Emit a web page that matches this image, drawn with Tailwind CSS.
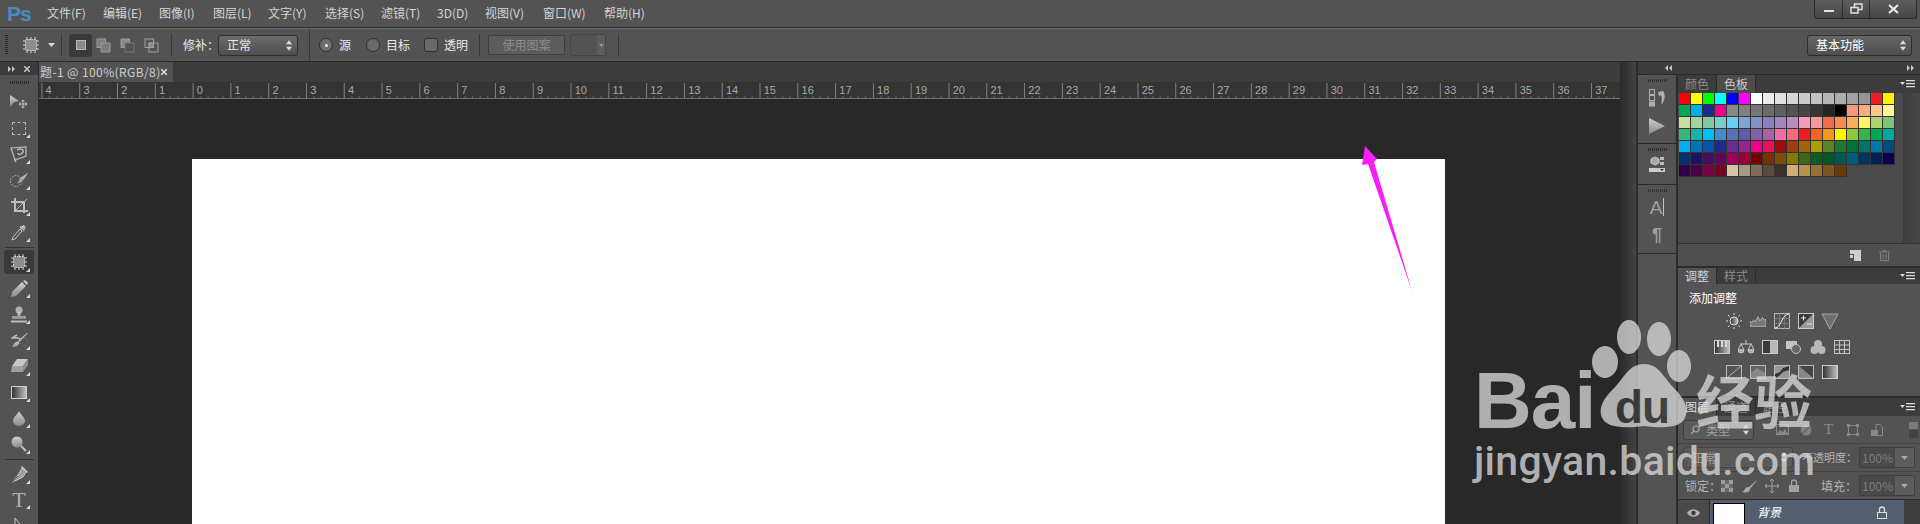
<!DOCTYPE html>
<html lang="en">
  <head>
    <meta charset="UTF-8" />
    <title>Photoshop</title>
    <script src="https://cdn.jsdelivr.net/npm/@tailwindcss/browser@4"></script>
  </head>
  <body class="bg-[#535353] overflow-hidden font-['Noto_Sans_CJK_SC',sans-serif]">
    <svg width="0" height="0" class="absolute">
      <defs>
        <linearGradient id="grey" x1="0" y1="0" x2="0" y2="1"><stop offset="0" stop-color="#d0d0d0" /><stop offset="1" stop-color="#8a8a8a" /></linearGradient>
        <linearGradient id="side" x1="0" y1="0" x2="1" y2="0"><stop offset="0" stop-color="#2e2e2e" /><stop offset="1" stop-color="#c4c4c4" /></linearGradient>
        <symbol id="panel-menu" viewBox="0 0 15 8"><path d="M0 2h5L2.500 5z" fill="#ddd" /><path d="M6 0h9v1.2H6zM6 3h9v1.2H6zM6 6h9v1.2H6z" fill="#ddd" /></symbol>
        <symbol id="updown" viewBox="0 0 7 12"><path d="M3.500 0 7 4.500H0zM3.500 12 0 7.500h7z" fill="#ddd" /></symbol>
        <symbol id="patch" viewBox="0 0 18 18"><path d="M1 5h16M1 9h16M1 13h16M5 1v16M9 1v16M13 1v16" stroke="#d8d8d8" fill="none" /><rect x="3.500" y="3.500" width="11" height="11" rx="1" fill="#8e8e8e" stroke="#d8d8d8" stroke-dasharray="1.500 1" /></symbol>
        <symbol id="corner" viewBox="0 0 4 4"><path d="M4 0v4H0z" fill="#d8d8d8" /></symbol>
      </defs>
    </svg>

    <div class="relative w-[1920px] h-[524px] overflow-hidden">
      <!-- menu bar -->
      <div class="h-[28px] flex items-center bg-[#535353] border-b border-[#2f2f2f]">
        <div class="w-[47px] pl-[7px] text-[21px] leading-none font-bold tracking-[-1px] text-[#4a8ac0] font-['Liberation_Sans',sans-serif]">Ps</div>
        <div class="flex gap-[16px] mb-px text-[12px] text-[#d4d4d4]">
          <span class="w-[40px] whitespace-nowrap">文件(F)</span>
          <span class="w-[40px] whitespace-nowrap">编辑(E)</span>
          <span class="w-[38px] whitespace-nowrap">图像(I)</span>
          <span class="w-[39px] whitespace-nowrap">图层(L)</span>
          <span class="w-[41px] whitespace-nowrap">文字(Y)</span>
          <span class="w-[40px] whitespace-nowrap">选择(S)</span>
          <span class="w-[40px] whitespace-nowrap">滤镜(T)</span>
          <span class="w-[32px] whitespace-nowrap">3D(D)</span>
          <span class="w-[42px] whitespace-nowrap">视图(V)</span>
          <span class="w-[45px] whitespace-nowrap">窗口(W)</span>
          <span class="whitespace-nowrap">帮助(H)</span>
        </div>
        <div class="ml-auto mr-[3px] mb-[9px] w-[103px] h-[19px] flex rounded-b-[3px] border border-t-0 border-[#2b2b2b] bg-gradient-to-b from-[#5c5c5c] to-[#474747]">
          <div class="w-[28px] flex items-center justify-center border-r border-[#2b2b2b]"><div class="w-[10px] h-[2px] mt-[4px] bg-[#e0e0e0]"></div></div>
          <div class="w-[27px] flex items-center justify-center border-r border-[#2b2b2b]">
            <svg width="13" height="11" viewBox="0 0 13 11" fill="none" stroke="#e0e0e0" stroke-width="1.500"><rect x="4.500" y="1" width="7.500" height="5.500" /><rect x="1" y="4.500" width="7" height="5.500" fill="#505050" /></svg>
          </div>
          <div class="flex-1 flex items-center justify-center">
            <svg width="11" height="10" viewBox="0 0 11 10" stroke="#e8e8e8" stroke-width="2.200"><path d="M1 1l9 8M10 1l-9 8" /></svg>
          </div>
        </div>
      </div>

      <!-- options bar -->
      <div class="h-[34px] flex items-center bg-[#535353] border-t border-b border-[#6a6a6a] border-b-[#2a2a2a] text-[12px] text-[#e8e8e8]">
        <div class="ml-[5px] w-[3px] h-[20px] bg-[repeating-linear-gradient(180deg,#2f2f2f_0,#2f2f2f_1px,transparent_1px,transparent_2px)]"></div>
        <svg class="ml-[14px]" width="18" height="18"><use href="#patch" /></svg>
        <svg class="ml-[8px]" width="7" height="4" viewBox="0 0 7 4"><path d="M0 0h7L3.500 4z" fill="#ddd" /></svg>
        <div class="ml-[6px] w-px h-[22px] bg-[#3a3a3a]"></div>
        <div class="ml-[7px] w-[23px] h-[23px] flex items-center justify-center rounded-[3px] bg-[#3a3a3a]">
          <div class="w-[10px] h-[10px] border border-[#b8b8b8] bg-[#8c8c8c]"></div>
        </div>
        <svg class="ml-[4px]" width="15" height="15" viewBox="0 0 15 15" fill="none" stroke="#9c9c9c"><rect x="1" y="1" width="8.500" height="8.500" fill="#7d7d7d" /><rect x="5" y="5" width="9" height="9" fill="#7d7d7d" /></svg>
        <svg class="ml-[9px]" width="15" height="15" viewBox="0 0 15 15" fill="none" stroke="#9c9c9c"><rect x="1" y="1" width="8.500" height="8.500" fill="#8c8c8c" /><rect x="5" y="5" width="9" height="9" fill="#535353" stroke="#777" /></svg>
        <svg class="ml-[9px]" width="15" height="15" viewBox="0 0 15 15" fill="none" stroke="#a0a0a0"><rect x="1" y="1" width="8.500" height="8.500" /><rect x="5" y="5" width="9" height="9" /><rect x="5" y="5" width="4.500" height="4.500" fill="#8c8c8c" /></svg>
        <div class="ml-[12px] w-px h-[22px] bg-[#3a3a3a]"></div>
        <span class="ml-[11px] w-[35px] whitespace-nowrap">修补：</span>
        <div class="w-[80px] h-[21px] flex items-center pl-[8px] pr-[5px] rounded-[3px] border border-[#2f2f2f] bg-gradient-to-b from-[#6c6c6c] to-[#4e4e4e]">
          <span>正常</span>
          <svg class="ml-auto" width="6" height="11"><use href="#updown" /></svg>
        </div>
        <div class="ml-[11px] w-px h-[32px] bg-[#3a3a3a]"></div>
        <div class="ml-[9px] w-[14px] h-[14px] flex items-center justify-center rounded-full border border-[#2f2f2f] bg-[#6e6e6e]"><div class="w-[3px] h-[3px] rounded-full bg-white"></div></div>
        <span class="ml-[6px]">源</span>
        <div class="ml-[15px] w-[14px] h-[14px] rounded-full border border-[#2f2f2f] bg-[#6a6a6a]"></div>
        <span class="ml-[6px]">目标</span>
        <div class="ml-[14px] w-[14px] h-[14px] rounded-[3px] border border-[#2f2f2f] bg-[#6a6a6a]"></div>
        <span class="ml-[6px]">透明</span>
        <div class="ml-[11px] w-px h-[22px] bg-[#3a3a3a]"></div>
        <div class="ml-[8px] w-[77px] h-[20px] flex items-center justify-center rounded-[2px] border border-[#3f3f3f] bg-[#5c5c5c] text-[#8c8c8c]">使用图案</div>
        <div class="ml-[5px] w-[36px] h-[22px] flex rounded-[2px] border border-[#454545]">
          <div class="flex-1"></div>
          <div class="w-[8px] flex items-center justify-center bg-[#5e5e5e]"><svg width="5" height="3" viewBox="0 0 5 3"><path d="M0 0h5L2.500 3z" fill="#999" /></svg></div>
        </div>
        <div class="ml-[12px] w-px h-[22px] bg-[#3a3a3a]"></div>
        <div class="ml-auto mr-[8px] w-[105px] h-[21px] flex items-center pl-[8px] pr-[5px] rounded-[3px] border border-[#2f2f2f] bg-gradient-to-b from-[#666] to-[#4e4e4e]">
          <span class="text-white">基本功能</span>
          <svg class="ml-auto" width="6" height="11"><use href="#updown" /></svg>
        </div>
      </div>

      <!-- workspace -->
      <div class="flex h-[462px]">
        <!-- tools -->
        <div class="w-[39px] shrink-0 flex flex-col bg-[#535353] border-r border-[#2b2b2b]">
          <div class="h-[13px] shrink-0 flex items-center justify-between px-[8px] bg-[#3b3b3b]">
            <svg width="7" height="6" viewBox="0 0 7 6" fill="#c8c8c8"><path d="M0 0l3 3-3 3zM4 0l3 3-3 3z" /></svg>
            <svg width="6" height="6" viewBox="0 0 6 6" stroke="#c8c8c8" stroke-width="1.500"><path d="M0 0l6 6M6 0l-6 6" /></svg>
          </div>
          <div class="h-[14px] shrink-0 flex items-center justify-center"><div class="w-[19px] h-[3px] bg-[repeating-linear-gradient(90deg,#2f2f2f_0,#2f2f2f_1px,transparent_1px,transparent_2px)]"></div></div>

          <div class="h-[26px] shrink-0 flex items-center justify-center">
            <svg width="20" height="16" viewBox="0 0 20 16"><path d="M1 1l9 6-5 1-4 5z" fill="url(#grey)" /><path d="M14 6v8M10 10h8M12.500 7.500 14 6l1.500 1.500M12.500 12.500 14 14l1.500-1.500M11.500 8.500 10 10l1.500 1.500M16.500 8.500 18 10l-1.500 1.500" fill="none" stroke="#c4c4c4" /></svg>
          </div>
          <div class="relative h-[26px] shrink-0 flex items-center justify-center">
            <div class="w-[14px] h-[13px] border border-dashed border-[#b8b8b8]"></div>
            <svg class="absolute right-[8px] bottom-[3px]" width="4" height="4"><use href="#corner" /></svg>
          </div>
          <div class="relative h-[26px] shrink-0 flex items-center justify-center">
            <svg width="18" height="18" viewBox="0 0 18 18" fill="none" stroke="#bdbdbd" stroke-width="1.200"><path d="M1 3l15-1 0 9-11 4z" /><path d="M7 5c3-2 7-1 6 2s-5 3-5 1M5 15l1 2" stroke-width="1.500" /></svg>
            <svg class="absolute right-[8px] bottom-[3px]" width="4" height="4"><use href="#corner" /></svg>
          </div>
          <div class="relative h-[26px] shrink-0 flex items-center justify-center">
            <svg width="19" height="16" viewBox="0 0 19 16"><circle cx="6" cy="9" r="5.500" fill="none" stroke="#c4c4c4" stroke-dasharray="1.500 1.500" /><path d="M18 1 10 6 7 12l5-2z" fill="url(#grey)" /></svg>
            <svg class="absolute right-[8px] bottom-[3px]" width="4" height="4"><use href="#corner" /></svg>
          </div>
          <div class="relative h-[26px] shrink-0 flex items-center justify-center">
            <svg width="17" height="17" viewBox="0 0 17 17" fill="none" stroke="#bdbdbd" stroke-width="2"><path d="M0 4h13v11M4 0v13h13" /><path d="M4 13 16 1" stroke-width="1" /></svg>
            <svg class="absolute right-[8px] bottom-[3px]" width="4" height="4"><use href="#corner" /></svg>
          </div>
          <div class="relative h-[26px] shrink-0 flex items-center justify-center">
            <svg width="16" height="17" viewBox="0 0 16 17"><path d="M9 5 2 13l-1 3 3-1 7-8z" fill="none" stroke="#c4c4c4" /><path d="M8 3l5 5 1-3 1-1-2-3-2 1z" fill="url(#grey)" /></svg>
            <svg class="absolute right-[8px] bottom-[3px]" width="4" height="4"><use href="#corner" /></svg>
          </div>
          <div class="h-[4px] shrink-0 flex items-center justify-center"><div class="w-[29px] h-px bg-[#333]"></div></div>

          <div class="relative h-[26px] shrink-0 flex items-center justify-center">
            <div class="absolute inset-x-[4px] inset-y-px rounded-[3px] bg-[#3a3a3a]"></div>
            <svg class="relative" width="18" height="18"><use href="#patch" /></svg>
            <svg class="absolute right-[8px] bottom-[3px]" width="4" height="4"><use href="#corner" /></svg>
          </div>
          <div class="relative h-[26px] shrink-0 flex items-center justify-center">
            <svg width="17" height="17" viewBox="0 0 17 17"><path d="M11 2 1 12l-1 5 5-1L15 6z" fill="url(#grey)" /><path d="M12 1l4 4 1-2-3-3z" fill="#c8c8c8" /></svg>
            <svg class="absolute right-[8px] bottom-[3px]" width="4" height="4"><use href="#corner" /></svg>
          </div>
          <div class="relative h-[26px] shrink-0 flex items-center justify-center">
            <svg width="16" height="17" viewBox="0 0 16 17"><circle cx="8" cy="4" r="3.500" fill="#b0b0b0" /><path d="M6.500 6h3v4H15v3H1v-3h5.500z" fill="url(#grey)" /><rect x="0" y="14.500" width="16" height="2" fill="#bbb" /></svg>
            <svg class="absolute right-[8px] bottom-[3px]" width="4" height="4"><use href="#corner" /></svg>
          </div>
          <div class="relative h-[26px] shrink-0 flex items-center justify-center">
            <svg width="17" height="15" viewBox="0 0 17 15"><path d="M17 0 9 8l-3 2 2-3 8-7z" fill="#ccc" /><path d="M6 2 1 5h5c2 0 3 1 3 1" fill="none" stroke="#bbb" stroke-width="1.500" /><path d="M8 9c-2-1-5 0-7 5 3 0 7 0 7-5z" fill="url(#grey)" /><circle cx="13" cy="9" r="4" fill="none" stroke="#999" stroke-dasharray="1 1.500" /></svg>
            <svg class="absolute right-[8px] bottom-[3px]" width="4" height="4"><use href="#corner" /></svg>
          </div>
          <div class="relative h-[26px] shrink-0 flex items-center justify-center">
            <svg width="17" height="14" viewBox="0 0 17 14"><path d="M6 0h11l-5 7H1z" fill="#c8c8c8" /><path d="M1 7h11v6H0z" fill="#a0a0a0" /><path d="M12 7l5-7v6l-5 7z" fill="#8e8e8e" /></svg>
            <svg class="absolute right-[8px] bottom-[3px]" width="4" height="4"><use href="#corner" /></svg>
          </div>
          <div class="relative h-[26px] shrink-0 flex items-center justify-center">
            <svg width="16" height="13" viewBox="0 0 16 13"><rect x=".5" y=".5" width="15" height="12" fill="url(#side)" stroke="#cfcfcf" /></svg>
            <svg class="absolute right-[8px] bottom-[3px]" width="4" height="4"><use href="#corner" /></svg>
          </div>
          <div class="relative h-[26px] shrink-0 flex items-center justify-center">
            <svg width="12" height="15" viewBox="0 0 12 15"><path d="M6 0c1 3 6 6 6 10a6 5 0 0 1-12 0C0 6 5 3 6 0z" fill="url(#grey)" /></svg>
            <svg class="absolute right-[8px] bottom-[3px]" width="4" height="4"><use href="#corner" /></svg>
          </div>
          <div class="relative h-[26px] shrink-0 flex items-center justify-center">
            <svg width="16" height="16" viewBox="0 0 16 16"><circle cx="6" cy="6" r="5.500" fill="url(#grey)" /><path d="M10 10l5 5" stroke="#c0c0c0" stroke-width="2" /></svg>
            <svg class="absolute right-[8px] bottom-[3px]" width="4" height="4"><use href="#corner" /></svg>
          </div>
          <div class="h-[4px] shrink-0 flex items-center justify-center"><div class="w-[29px] h-px bg-[#333]"></div></div>

          <div class="relative h-[26px] shrink-0 flex items-center justify-center">
            <svg width="17" height="17" viewBox="0 0 17 17"><path d="M11 2l4 4-3 5-6 3-5 2 6-7z" fill="#9c9c9c" stroke="#c8c8c8" /><path d="M1 16l6-6" stroke="#444" /><path d="M11 0l6 6-1 1-6-6z" fill="#c8c8c8" /></svg>
            <svg class="absolute right-[8px] bottom-[3px]" width="4" height="4"><use href="#corner" /></svg>
          </div>
          <div class="relative h-[25px] shrink-0 flex items-center justify-center">
            <span class="text-[22px] leading-none text-[#b0b0b0] font-['Liberation_Serif',serif]">T</span>
            <svg class="absolute right-[8px] bottom-[3px]" width="4" height="4"><use href="#corner" /></svg>
          </div>
          <div class="h-[26px] shrink-0 flex items-center justify-center">
            <svg width="10" height="16" viewBox="0 0 10 16"><path d="M1 1v14l3-4h5z" fill="#4a4a4a" stroke="#c8c8c8" /></svg>
          </div>
        </div>

        <!-- document -->
        <div class="w-[1581px] shrink-0 flex flex-col overflow-hidden">
          <div class="h-[20px] shrink-0 flex bg-[#3c3c3c]">
            <div class="w-[134px] shrink-0 flex items-center justify-between pl-[1px] pr-[7px] bg-[#535353] text-[12px] tracking-[0.4px] text-[#cdcdcd] whitespace-nowrap">
              <span>题-1 @ 100%(RGB/8)</span>
              <svg class="shrink-0" width="6" height="6" viewBox="0 0 6 6" stroke="#ddd" stroke-width="1.500"><path d="M0 0l6 6M6 0l-6 6" /></svg>
            </div>
          </div>
          <div id="ruler" class="relative h-[17px] shrink-0 bg-[#343434] text-[11px] leading-none text-[#a8a8a8] font-['Liberation_Sans',sans-serif]">
            <svg class="absolute inset-0" width="1581" height="17">
              <defs>
                <pattern id="ticks" width="37.795" height="17" patternUnits="userSpaceOnUse" patternTransform="translate(2.400 0)">
                  <path d="M.5 1v15" stroke="#808080" fill="none" />
                  <path d="M8 14v2M15.500 14v2M23 14v2M30.500 14v2" stroke="#666" fill="none" />
                </pattern>
              </defs>
              <rect width="1581" height="17" fill="url(#ticks)" />
              <rect y="16" width="1581" height="1" fill="#727272" />
            </svg>
          </div>
          <div class="flex-1 bg-[#282828] pl-[153px] pt-[60px]">
            <div class="w-[1253px] h-[400px] bg-white"></div>
          </div>
        </div>

        <!-- gutter -->
        <div class="w-[18px] shrink-0 border-r-2 border-[#2b2b2b] bg-gradient-to-r from-[#2a2a2a] to-[#444]"></div>

        <!-- docks -->
        <div class="flex-1 flex flex-col">
          <div class="h-[13px] shrink-0 flex items-center justify-between pl-[27px] pr-[6px] bg-[#3c3c3c] border-b border-[#2b2b2b]">
            <svg width="7" height="6" viewBox="0 0 7 6" fill="#c8c8c8"><path d="M3 0v6L0 3zM7 0v6L4 3z" /></svg>
            <svg width="7" height="6" viewBox="0 0 7 6" fill="#c8c8c8"><path d="M0 0l3 3-3 3zM4 0l3 3-3 3z" /></svg>
          </div>
          <div class="flex-1 flex">
            <!-- icon dock -->
            <div class="w-[40px] shrink-0 flex flex-col border-r-2 border-[#2b2b2b]">
              <div class="h-[69px] shrink-0 flex flex-col items-center border-b border-[#2b2b2b]">
                <div class="mt-[4px] w-[19px] h-[3px] bg-[repeating-linear-gradient(90deg,#2f2f2f_0,#2f2f2f_1px,transparent_1px,transparent_2px)]"></div>
                <svg class="mt-[7px]" width="17" height="18" viewBox="0 0 17 18"><g fill="none" stroke="#b0b0b0"><rect x=".5" y=".5" width="5" height="5" /><rect x=".5" y="6.500" width="5" height="5" /></g><rect y="12.500" width="6" height="5" fill="#b0b0b0" /><path d="M9 3l5-1c3 4 2 10-2 14 1-4 1-8 0-10l-2 1z" fill="#b0b0b0" /></svg>
                <svg class="mt-[11px]" width="16" height="16" viewBox="0 0 16 16"><path d="M0 0l16 8-16 8z" fill="url(#grey)" /></svg>
              </div>
              <div class="h-[41px] shrink-0 flex flex-col items-center border-b border-[#2b2b2b]">
                <div class="mt-[4px] w-[19px] h-[3px] bg-[repeating-linear-gradient(90deg,#2f2f2f_0,#2f2f2f_1px,transparent_1px,transparent_2px)]"></div>
                <svg class="mt-[5px]" width="16" height="17" viewBox="0 0 16 17"><path d="M6 1l4 2v4l-4 2-4-2V3z" fill="#a8a8a8" stroke="#ccc" /><rect x="11" y="1" width="4" height="3" fill="#bbb" /><rect x="11" y="6" width="4" height="3" fill="#bbb" /><rect y="12" width="16" height="4" fill="#ccc" /><path d="M11 13h4l-2 2z" fill="#333" /></svg>
              </div>
              <div class="h-[69px] shrink-0 flex flex-col items-center border-b border-[#2b2b2b]">
                <div class="mt-[4px] w-[19px] h-[3px] bg-[repeating-linear-gradient(90deg,#2f2f2f_0,#2f2f2f_1px,transparent_1px,transparent_2px)]"></div>
                <div class="mt-[5px] h-[20px] flex items-center text-[19px] leading-none text-[#a0a0a0] font-['Liberation_Sans',sans-serif]">A<span class="ml-px w-px h-[18px] bg-[#c0c0c0]"></span></div>
                <div class="mt-[9px] text-[18px] font-bold leading-none text-[#a0a0a0] font-['Liberation_Sans',sans-serif]">¶</div>
              </div>
            </div>

            <!-- panels -->
            <div class="flex-1 flex flex-col">
              <!-- swatches -->
              <div class="h-[193px] shrink-0 flex flex-col border-b-2 border-[#2b2b2b]">
                <div class="h-[18px] shrink-0 flex bg-[#3c3c3c] text-[12px]">
                  <div class="w-[39px] flex items-center justify-center text-[#8c8c8c] border-r border-[#2b2b2b]">颜色</div>
                  <div class="w-[39px] flex items-center justify-center bg-[#4c4c4c] text-[#c8c8c8] border-r border-[#2b2b2b]">色板</div>
                  <svg class="ml-auto mr-[5px] mt-[5px]" width="15" height="8"><use href="#panel-menu" /></svg>
                </div>
                <div class="flex-1 flex bg-[#4a4a4a]">
                  <div id="swatches" class="flex-1 pl-px grid grid-cols-[repeat(18,12px)] auto-rows-[12px]"></div>
                  <div class="w-[17px] shrink-0 bg-gradient-to-r from-[#3c3c3c] to-[#474747]"></div>
                </div>
                <div class="h-[23px] shrink-0 flex items-center bg-[#4f4f4f] border-t border-[#333]">
                  <svg class="ml-[172px]" width="11" height="11" viewBox="0 0 11 11"><path d="M0 0h11v11H4V4H0z" fill="#cfcfcf" /><path d="M0 5h3v3H0z" fill="#cfcfcf" /></svg>
                  <svg class="ml-[18px]" width="11" height="11" viewBox="0 0 11 11" fill="none" stroke="#808080"><path d="M0 2h11M4 2V.5h3V2M1.500 2.500v8h8v-8M4 4v5M7 4v5" /></svg>
                </div>
              </div>

              <!-- adjustments -->
              <div class="h-[130px] shrink-0 flex flex-col border-b-2 border-[#2b2b2b] bg-[#535353]">
                <div class="h-[16px] shrink-0 flex bg-[#3c3c3c] text-[12px] leading-none">
                  <div class="w-[39px] flex items-center justify-center bg-[#535353] text-[#c4d4e4] border-r border-[#2b2b2b]">调整</div>
                  <div class="w-[39px] flex items-center justify-center text-[#8c8c8c] border-r border-[#2b2b2b]">样式</div>
                  <svg class="ml-auto mr-[5px] mt-[4px]" width="15" height="8"><use href="#panel-menu" /></svg>
                </div>
                <div class="pl-[11px] pt-[5px] text-[12px] leading-[18px] text-white">添加调整</div>
                <div class="mt-[6px] ml-[48px] flex gap-[8px]">
                  <svg width="16" height="16" viewBox="0 0 16 16"><circle cx="8" cy="8" r="4" fill="url(#side)" stroke="#ddd" /><path d="M8 0v2M8 14v2M0 8h2M14 8h2M2 2l1.500 1.500M12.500 12.500 14 14M14 2l-1.500 1.500M2 14l1.500-1.500" stroke="#ddd" /></svg>
                  <svg width="16" height="16" viewBox="0 0 18 16"><path d="M0 14V8l2 2 2-3 2 2 3-6 2 5 3-4 2 3 2-1v8z" fill="#777" stroke="#ccc" stroke-width=".8" /></svg>
                  <svg width="16" height="16" viewBox="0 0 16 16" fill="none" stroke="#b8b8b8"><rect x=".5" y=".5" width="15" height="15" /><path d="M.5 5.500h15M.5 10.500h15M5.500 .5v15M10.500 .5v15" stroke="#777" /><path d="M1 15C7 15 8 1 15 1" stroke="#eee" /></svg>
                  <svg width="16" height="16" viewBox="0 0 16 16"><rect x=".5" y=".5" width="15" height="15" fill="#3a3a3a" stroke="#ccc" /><path d="M1 15 15 15 15 1z" fill="#9a9a9a" /><path d="M3 5h5M5.500 2.500v5M9 11h5" stroke="#eee" /></svg>
                  <svg width="16" height="16" viewBox="0 0 16 16"><path d="M0 1h16L8 16z" fill="#6e6e6e" stroke="#bbb" stroke-width=".8" /></svg>
                </div>
                <div class="mt-[11px] ml-[36px] flex gap-[8px]">
                  <svg width="16" height="14" viewBox="0 0 16 14"><rect x=".5" y=".5" width="15" height="13" fill="url(#side)" stroke="#ccc" /><path d="M4 1v6M8 1v6M12 1v6" stroke="#ddd" stroke-width="2" /></svg>
                  <svg width="16" height="14" viewBox="0 0 16 14" fill="none" stroke="#c8c8c8"><path d="M8 0v4M2 4h12M3 4 0 10h6zM13 4l-3 6h6z" /><path d="M0 10a3 3 0 0 0 6 0zM10 10a3 3 0 0 0 6 0z" fill="#aaa" /></svg>
                  <svg width="16" height="14" viewBox="0 0 16 14"><rect x=".5" y=".5" width="15" height="13" fill="#3a3a3a" stroke="#ccc" /><rect x="8" y="1" width="7" height="12" fill="#b8b8b8" /></svg>
                  <svg width="16" height="14" viewBox="0 0 16 14"><rect y="1" width="11" height="8" fill="#c4c4c4" /><circle cx="10" cy="9" r="4.500" fill="#666" stroke="#c4c4c4" /></svg>
                  <svg width="16" height="14" viewBox="0 0 16 14" fill="#b8b8b8"><circle cx="8" cy="4" r="4" /><circle cx="4.500" cy="10" r="4" /><circle cx="11.500" cy="10" r="4" /></svg>
                  <svg width="16" height="14" viewBox="0 0 16 14" fill="none" stroke="#c4c4c4"><rect x=".5" y=".5" width="15" height="13" /><path d="M.5 5h15M.5 9.500h15M5.500 .5v13M10.500 .5v13" /></svg>
                </div>
                <div class="mt-[11px] ml-[48px] flex gap-[8px]">
                  <svg width="16" height="14" viewBox="0 0 16 14"><rect x=".5" y=".5" width="15" height="13" fill="#555" stroke="#bbb" /><path d="M1 13 15 1" stroke="#aaa" /></svg>
                  <svg width="16" height="14" viewBox="0 0 16 14"><rect x=".5" y=".5" width="15" height="13" fill="#666" stroke="#bbb" /><path d="M1 8l6-5 8 5v5H1z" fill="#888" /></svg>
                  <svg width="16" height="14" viewBox="0 0 16 14"><rect x=".5" y=".5" width="15" height="13" fill="#999" stroke="#bbb" /><path d="M1 13V9l5-2 3-4 6-2v4l-6 2-4 4z" fill="#333" /></svg>
                  <svg width="16" height="14" viewBox="0 0 16 14"><rect x=".5" y=".5" width="15" height="13" fill="#888" stroke="#bbb" /><path d="M1 1l14 12V1z" fill="#444" /></svg>
                  <svg width="16" height="14" viewBox="0 0 16 14"><rect x=".5" y=".5" width="15" height="13" fill="url(#side)" stroke="#ccc" /></svg>
                </div>
              </div>

              <!-- layers -->
              <div class="flex-1 flex flex-col bg-[#535353] text-[12px]">
                <div class="h-[18px] shrink-0 flex bg-[#3c3c3c] leading-none">
                  <div class="w-[39px] flex items-center justify-center bg-[#535353] text-[#d8d8d8] border-r border-[#2b2b2b]">图层</div>
                  <div class="w-[39px] flex items-center justify-center text-[#8c8c8c] border-r border-[#2b2b2b]">通道</div>
                  <div class="w-[39px] flex items-center justify-center text-[#8c8c8c] border-r border-[#2b2b2b]">路径</div>
                  <svg class="ml-auto mr-[5px] mt-[5px]" width="15" height="8"><use href="#panel-menu" /></svg>
                </div>
                <div class="h-[28px] shrink-0 flex items-center border-b border-[#444]">
                  <div class="ml-[5px] w-[71px] h-[20px] flex items-center pl-[6px] pr-[4px] gap-[6px] rounded-[3px] border border-[#3f3f3f] bg-[#5a5a5a] text-[#a0a0a0]">
                    <svg width="10" height="10" viewBox="0 0 10 10" fill="none" stroke="#aaa" stroke-width="1.200"><circle cx="6" cy="4" r="3" /><path d="M4 6 1 9" /></svg>
                    <span>类型</span>
                    <svg class="ml-auto" width="6" height="11"><use href="#updown" /></svg>
                  </div>
                  <svg class="ml-[22px]" width="13" height="11" viewBox="0 0 13 11"><rect x=".5" y=".5" width="12" height="10" fill="none" stroke="#888" /><path d="M1 10l3-4 3 2 2-3 3 5z" fill="#888" /></svg>
                  <svg class="ml-[11px]" width="12" height="12" viewBox="0 0 12 12"><circle cx="6" cy="6" r="5.500" fill="#808080" /><path d="M2 10 10 2" stroke="#555" /></svg>
                  <span class="ml-[12px] w-[12px] text-[15px] leading-none text-[#8c8c8c] font-['Liberation_Serif',serif]">T</span>
                  <svg class="ml-[11px]" width="12" height="12" viewBox="0 0 12 12"><rect x="1.500" y="1.500" width="9" height="9" fill="none" stroke="#888" /><path d="M0 0h3v3H0zM9 0h3v3H9zM0 9h3v3H0zM9 9h3v3H9z" fill="#888" /></svg>
                  <svg class="ml-[12px]" width="12" height="12" viewBox="0 0 12 12"><path d="M5 .5h4l2.500 2.500v8.500H5z" fill="none" stroke="#888" /><rect y="6" width="7" height="6" fill="#888" /></svg>
                  <div class="ml-auto mr-[2px] w-[9px] h-[16px] flex flex-col gap-px">
                    <div class="flex-1 bg-[#7a7a7a]"></div>
                    <div class="flex-1 bg-[#444]"></div>
                  </div>
                </div>
                <div class="h-[28px] shrink-0 flex items-center border-b border-[#444]">
                  <div class="ml-[5px] w-[110px] h-[21px] flex items-center pl-[8px] pr-[5px] rounded-[3px] border border-[#454545] bg-[#5a5a5a] text-[#a0a0a0]">
                    <span>正常</span>
                    <svg class="ml-auto" width="6" height="11"><use href="#updown" /></svg>
                  </div>
                  <span class="ml-[9px] text-[#b4b4b4] text-[11px] whitespace-nowrap">不透明度：</span>
                  <div class="ml-auto mr-[5px] w-[56px] h-[21px] flex items-center rounded-[2px] border border-[#3f3f3f] bg-[#4a4a4a] text-[#7c7c7c]">
                    <span class="w-[35px] text-center">100%</span>
                    <div class="flex-1 self-stretch flex items-center justify-center bg-[#5c5c5c]"><svg width="7" height="4" viewBox="0 0 7 4"><path d="M0 0h7L3.500 4z" fill="#aaa" /></svg></div>
                  </div>
                </div>
                <div class="h-[28px] shrink-0 flex items-center border-b border-[#2b2b2b]">
                  <span class="ml-[7px] w-[33px] text-[#b4b4b4] whitespace-nowrap">锁定：</span>
                  <svg class="ml-[3px]" width="12" height="12" viewBox="0 0 12 12"><rect width="12" height="12" fill="#6a6a6a" /><path d="M0 0h4v4H0zM8 0h4v4H8zM4 4h4v4H4zM0 8h4v4H0zM8 8h4v4H8z" fill="#9a9a9a" /></svg>
                  <svg class="ml-[9px]" width="16" height="14" viewBox="0 0 16 14"><path d="M16 0 7 8l-1 1 2 1z" fill="#aaa" /><path d="M6 8c-3 0-3 4-6 5 4 1 8 0 8-3z" fill="#aaa" /></svg>
                  <svg class="ml-[7px]" width="14" height="14" viewBox="0 0 14 14" fill="none" stroke="#a0a0a0"><path d="M7 0v14M0 7h14M5 2l2-2 2 2M5 12l2 2 2-2M2 5 0 7l2 2M12 5l2 2-2 2" /></svg>
                  <svg class="ml-[10px]" width="10" height="13" viewBox="0 0 10 13"><path d="M2.500 6V3.500a2.500 2.500 0 0 1 5 0V6" fill="none" stroke="#a0a0a0" stroke-width="1.300" /><rect y="6" width="10" height="7" fill="#a0a0a0" /></svg>
                  <span class="ml-auto text-[#b4b4b4] whitespace-nowrap">填充：</span>
                  <div class="ml-[2px] mr-[5px] w-[56px] h-[21px] flex items-center rounded-[2px] border border-[#3f3f3f] bg-[#4a4a4a] text-[#7c7c7c]">
                    <span class="w-[35px] text-center">100%</span>
                    <div class="flex-1 self-stretch flex items-center justify-center bg-[#5c5c5c]"><svg width="7" height="4" viewBox="0 0 7 4"><path d="M0 0h7L3.500 4z" fill="#aaa" /></svg></div>
                  </div>
                </div>
                <div class="flex-1 flex bg-[#4a4a4a]">
                  <div class="w-[32px] shrink-0 flex items-center justify-center pb-[2px] border-r border-[#2b2b2b]">
                    <svg width="13" height="8" viewBox="0 0 13 8"><path d="M0 4c3-5 10-5 13 0-3 5-10 5-13 0z" fill="#b0b0b0" /><circle cx="6.500" cy="4" r="2.200" fill="#3a3a3a" /></svg>
                  </div>
                  <div class="w-[194px] shrink-0 flex items-start bg-[#535f70] pt-[3px] pl-[3px]">
                    <div class="w-[32px] h-[24px] bg-white border border-black"></div>
                    <span class="ml-[12px] text-white italic">背景</span>
                    <svg class="ml-auto mr-[17px] mt-[3px]" width="10" height="13" viewBox="0 0 10 13"><path d="M2.500 6V3.500a2.500 2.500 0 0 1 5 0V6" fill="none" stroke="#ddd" stroke-width="1.300" /><rect x=".5" y="6.500" width="9" height="6" fill="none" stroke="#ddd" /></svg>
                  </div>
                  <div class="flex-1 bg-[#3f3f3f]"></div>
                </div>
              </div>
            </div>
          </div>
        </div>
      </div>

      <!-- annotation arrow -->
      <svg class="absolute left-0 top-0 pointer-events-none" width="1920" height="524">
        <polygon points="1365,146 1377,159 1374,162 1412,291 1368,164 1362,165" fill="#f520f5" />
      </svg>

      <!-- watermark -->
      <div class="absolute left-0 top-0 w-[1920px] h-[524px] pointer-events-none opacity-75">
        <svg class="absolute left-0 top-0" width="1920" height="524" fill="#dcdcdc">
          <ellipse cx="1605" cy="362" rx="13" ry="16" />
          <ellipse cx="1629" cy="337" rx="12" ry="17" />
          <ellipse cx="1659" cy="339" rx="12" ry="17" />
          <ellipse cx="1679" cy="366" rx="12" ry="16" />
          <path d="M1644 364c14 0 19 12 28 22 10 10 16 18 14 29-3 12-18 14-42 11-24 3-40 1-43-11-2-11 5-19 15-29 9-10 14-22 28-22z" />
        </svg>
        <div class="absolute left-[1474px] top-[354px] text-[80px] leading-[94px] font-bold tracking-[-1px] text-[#dcdcdc] font-['Liberation_Sans',sans-serif]">Bai</div>
        <div class="absolute left-[1615px] top-[380px] text-[46px] leading-[54px] font-bold tracking-[-1px] text-[#3a3a3a] font-['Liberation_Sans',sans-serif]">du</div>
        <div class="absolute left-[1696px] top-[357px] text-[58px] leading-[84px] font-bold text-[#dcdcdc]">经验</div>
        <div class="absolute left-[1474px] top-[437px] text-[41px] leading-[48px] tracking-[0.3px] font-medium text-[#dcdcdc] whitespace-nowrap font-['Roboto',sans-serif]">jingyan.baidu.com</div>
      </div>
    </div>

    <script>
      // ruler numbers, one per centimetre, zero on the document edge
      const ruler = document.getElementById("ruler");
      for (let n = -4; n <= 37; n++) {
        const label = document.createElement("span");
        label.className = "absolute top-[3px]";
        label.style.left = 154.8 + n * 37.795 + 3 + "px";
        label.textContent = Math.abs(n);
        ruler.appendChild(label);
      }

      const swatchRows = [
        "ff0000 ffff00 00ff00 00ffff 0000ff ff00ff ffffff ebebeb e1e1e1 d7d7d7 cccccc c2c2c2 b7b7b7 acacac a1a1a1 959595 ee1c25 fff200",
        "00a651 00aeef 1f2b8c ec008c 898989 808080 767676 6b6b6b 5f5f5f 535353 464646 363636 252525 000000 f7977a f9ad81 fdc68c fff799",
        "c6df9c a4d49d 81ca9d 7bcdc9 6ccff7 7ca6d8 8293ca 8881be a286bd bc8cbf f49bc1 f5999d f16c4d f68e54 fbaf5a fff467 acd372 7dc473",
        "39b778 17b4a4 00bff3 438ccb 5573b7 5e5ca7 855fa8 a763a9 ef6ea8 f16d7e ee1c24 f16522 f7941d fff100 8fc63d 37b44a 00a650 00a99e",
        "00aeef 0072bc 0054a5 1f2b8c 652c91 91278e ec008c ed0f5c 9e0b0f a0410d a36209 aba000 598527 1a7b30 007236 00746b 0076a4 004a80",
        "003370 1d1363 450e61 62055f 9e005c 9d0039 790000 7b3000 7c5000 827a00 3e6617 045f20 005824 005951 005b7e 003562 002056 0c004b",
        "30004a 4b0048 7a0045 7a0026 d7c4a8 a89880 7e6f5c 584b3f 3a312b d3ad72 b8914f 9a6f35 7f5220 6a3a08",
      ];
      const swatches = document.getElementById("swatches");
      swatchRows.join(" ").split(" ").forEach((hex) => {
        const cell = document.createElement("div");
        cell.className = "border-r border-b border-[#333]";
        cell.style.background = "#" + hex;
        swatches.appendChild(cell);
      });
    </script>
  </body>
</html>
